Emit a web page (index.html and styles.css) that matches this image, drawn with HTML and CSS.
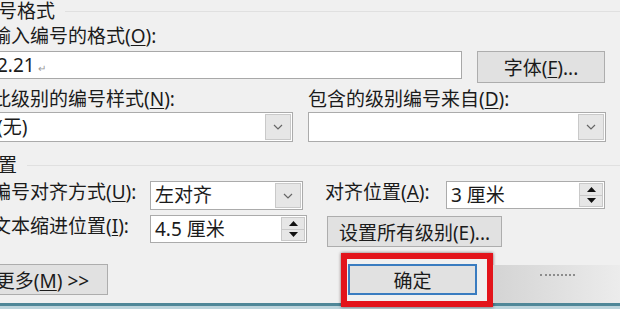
FILE: index.html
```html
<!DOCTYPE html>
<html lang="zh-CN">

<head>
    <meta charset="UTF-8">
    <meta name="viewport" content="width=device-width, initial-scale=1.0">
    <title>定义新多级列表</title>
    <link rel="stylesheet" href="styles.css">
</head>

<body>
    <div class="dialog">
        <div class="group-title">编号格式</div>
        <div class="label first-label">输入编号的格式(<u>O</u>):</div>
        <div class="row format-row">
            <div class="textbox format-box">2.21<span class="mark">↵</span></div>
            <button class="btn font-btn">字体(<u>F</u>)...</button>
        </div>
        <div class="row label-row">
            <div class="label style-label">此级别的编号样式(<u>N</u>):</div>
            <div class="label">包含的级别编号来自(<u>D</u>):</div>
        </div>
        <div class="row combo-row">
            <div class="combo combo-style">
                <span class="combo-text">(无)</span>
                <span class="combo-btn"><svg width="10" height="6" viewBox="0 0 10 6"><polyline points="1,1 5,5 9,1" fill="none" stroke="#666" stroke-width="1.2"/></svg></span>
            </div>
            <div class="combo combo-from">
                <span class="combo-text"></span>
                <span class="combo-btn"><svg width="10" height="6" viewBox="0 0 10 6"><polyline points="1,1 5,5 9,1" fill="none" stroke="#666" stroke-width="1.2"/></svg></span>
            </div>
        </div>

        <div class="group-title pos-title">位置</div>
        <div class="row align-row">
            <div class="label row-label">编号对齐方式(<u>U</u>):</div>
            <div class="combo combo-align">
                <span class="combo-text align-text">左对齐</span>
                <span class="combo-btn"><svg width="10" height="6" viewBox="0 0 10 6"><polyline points="1,1 5,5 9,1" fill="none" stroke="#666" stroke-width="1.2"/></svg></span>
            </div>
            <div class="label at-label">对齐位置(<u>A</u>):</div>
            <div class="spin spin-at">
                <span class="spin-text">3 厘米</span>
                <span class="spin-btns">
                    <span class="spin-half"><svg width="9" height="5" viewBox="0 0 9 5"><polygon points="0,5 4.5,0 9,5" fill="#111"/></svg></span>
                    <span class="spin-half"><svg width="9" height="5" viewBox="0 0 9 5"><polygon points="0,0 4.5,5 9,0" fill="#111"/></svg></span>
                </span>
            </div>
        </div>
        <div class="row indent-row">
            <div class="label row-label">文本缩进位置(<u>I</u>):</div>
            <div class="spin spin-indent">
                <span class="spin-text">4.5 厘米</span>
                <span class="spin-btns">
                    <span class="spin-half"><svg width="9" height="5" viewBox="0 0 9 5"><polygon points="0,5 4.5,0 9,5" fill="#111"/></svg></span>
                    <span class="spin-half"><svg width="9" height="5" viewBox="0 0 9 5"><polygon points="0,0 4.5,5 9,0" fill="#111"/></svg></span>
                </span>
            </div>
            <button class="btn all-btn">设置所有级别(E)...</button>
        </div>

        <div class="row footer">
            <button class="btn more-btn">更多(<u>M</u>) &gt;&gt;</button>
            <div class="highlight">
                <button class="btn ok-btn">确定</button>
            </div>
            <div class="cover"><span class="smear"></span></div>
        </div>
        <div class="taskbar"></div>
    </div>
</body>

</html>
```

FILE: styles.css
```css
body {
    margin: 0;
    overflow: hidden;
    background: #f0f0f0;
}

.dialog {
    width: 640px;
    height: 309px;
    margin-left: -20px;
    overflow: hidden;
    background: #f0f0f0;
    font-family: "Noto Sans", "Noto Sans CJK SC", sans-serif;
    font-size: 19px;
    color: #1b1b1b;
}

u {
    text-underline-offset: 2px;
}

.group-title {
    display: flex;
    align-items: center;
    height: 22px;
    line-height: 22px;
    margin-left: -1px;
}

.group-title::after {
    content: "";
    flex: 1;
    border-top: 1px solid #e0e0e0;
    margin-left: 10px;
}

.label {
    line-height: 22px;
    white-space: nowrap;
}

.first-label {
    margin-top: 3px;
    padding-left: 12px;
}

.row {
    display: flex;
    align-items: flex-start;
}

/* text box + font button */
.format-row {
    margin-top: 4px;
}

.textbox {
    box-sizing: border-box;
    height: 28px;
    border: 1px solid #a8a8a8;
    background: #fff;
    line-height: 26px;
    padding-left: 16px;
}

.format-box {
    width: 482px;
}

.mark {
    font-size: 10px;
    color: #999;
    margin-left: 3px;
}

.btn {
    box-sizing: border-box;
    font: inherit;
    color: inherit;
    background: #e1e1e1;
    border: 1px solid #adadad;
    padding: 0;
    white-space: nowrap;
}

.font-btn {
    width: 128px;
    height: 32px;
    margin-left: 15px;
}

/* combos */
.label-row {
    margin-top: 5px;
}

.style-label {
    width: 328px;
    box-sizing: border-box;
    padding-left: 12px;
}

.combo-row {
    margin-top: 2px;
}

.combo {
    box-sizing: border-box;
    height: 30px;
    display: flex;
    border: 1px solid #ababab;
    background: #fff;
}

.combo-style {
    width: 313px;
}

.combo-from {
    width: 298px;
    margin-left: 15px;
}

.combo-text {
    flex: 1;
    line-height: 28px;
    padding-left: 16px;
    white-space: nowrap;
}

.combo-btn {
    width: 24px;
    margin: 1px;
    display: flex;
    align-items: center;
    justify-content: center;
    background: #e6e6e6;
    border: 1px solid #c9c9c9;
}

/* position group */
.pos-title {
    margin-top: 12px;
}

.align-row {
    margin-top: 5px;
}

.row-label {
    width: 170px;
    box-sizing: border-box;
    padding-left: 12px;
}

.combo-align {
    width: 153px;
    height: 29px;
}

.align-text {
    padding-left: 4px;
    line-height: 27px;
}

.at-label {
    width: 121px;
    margin-left: 22px;
}

.spin {
    box-sizing: border-box;
    height: 28px;
    display: flex;
    border: 1px solid #ababab;
    background: #fff;
}

.spin-text {
    flex: 1;
    line-height: 26px;
    padding-left: 4px;
    white-space: nowrap;
}

.spin-btns {
    width: 24px;
    margin: 1px;
    display: flex;
    flex-direction: column;
}

.spin-half {
    flex: 1;
    display: flex;
    align-items: center;
    justify-content: center;
    background: #e6e6e6;
    border: 1px solid #c9c9c9;
}

.spin-half + .spin-half {
    border-top: none;
}

.spin-at {
    width: 159px;
}

.indent-row {
    margin-top: 5px;
}

.spin-indent {
    width: 157px;
}

.all-btn {
    width: 175px;
    height: 31px;
    margin-top: 1px;
    margin-left: 20px;
}

/* footer */
.footer {
    margin-top: 6px;
    height: 50px;
}

.more-btn {
    width: 128px;
    height: 31px;
    margin-top: 11px;
    padding-right: 3px;
}

.highlight {
    margin-left: 233px;
    padding: 5px 10px 6px 1px;
    border: 6px solid #e3141b;
    box-shadow: 0 0 3px rgba(40, 0, 0, 0.6);
}

.ok-btn {
    display: block;
    width: 129px;
    height: 31px;
    border: 2px solid #3a7cc0;
}

.cover {
    flex: 1;
    height: 38px;
    margin-top: 12px;
    background: linear-gradient(90deg, #d4d4d4, #e2e2e2 60%, #ececec);
}

.smear {
    display: block;
    width: 35px;
    margin: 9px 0 0 47px;
    border-top: 2px dotted #8c8c8c;
}

.taskbar {
    height: 6px;
    background: linear-gradient(#4f8798 0 3px, #bcd4dc 3px);
}
```
